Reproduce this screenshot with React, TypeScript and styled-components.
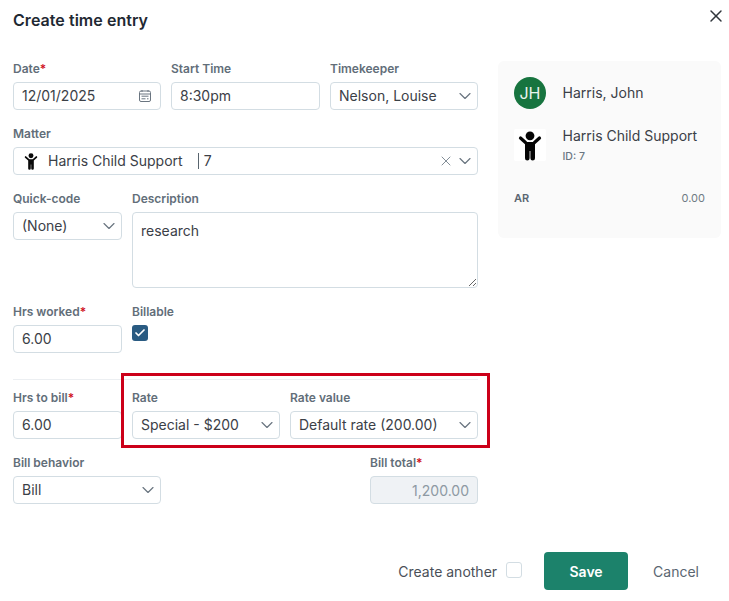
import React from "react";
import styled, { createGlobalStyle } from "styled-components";
import { X, ChevronDown, Check } from "lucide-react";

const Global = createGlobalStyle`
  html, body { margin: 0; padding: 0; background: #fff; }
  body { font-family: Inter, "Liberation Sans", sans-serif; color: #3b4047; }
  * { box-sizing: border-box; }
`;

const Page = styled.div`
  position: relative;
  width: 729px;
  height: 601px;
  overflow: hidden;
  padding: 0 8px 0 13px;
`;

const Header = styled.header`
  height: 62px;
  padding-top: 11px;
  display: flex;
  justify-content: space-between;
  align-items: flex-start;
`;

const Title = styled.h1`
  margin: 0;
  font-size: 16px;
  line-height: 19px;
  font-weight: 600;
  letter-spacing: 0.05px;
  color: #1f2933;
`;

const Close = styled.button`
  border: 0;
  background: none;
  padding: 0;
  margin: -5px -5px 0 0;
  width: 20px;
  height: 20px;
  color: #30363c;
  display: flex;
`;

const Body = styled.div`
  display: flex;
  gap: 20px;
  align-items: flex-start;
`;

const Form = styled.div`
  width: 465px;
  display: flex;
  flex-direction: column;
  gap: 17px;
`;

const Row = styled.div`
  display: flex;
  gap: 10px;
`;

const SpacedRow = styled(Row)`
  justify-content: space-between;
`;

const Field = styled.div<{ $w?: number }>`
  display: flex;
  flex-direction: column;
  width: ${(p) => (p.$w ? `${p.$w}px` : "auto")};
  flex: ${(p) => (p.$w ? "0 0 auto" : "1 1 0")};
`;

const Label = styled.label`
  height: 20px;
  font-size: 12px;
  line-height: 14px;
  font-weight: 600;
  color: #626e79;
`;

const Req = styled.span`
  color: #d0121f;
`;

const Box = styled.div<{ $disabled?: boolean }>`
  height: 28px;
  border: 1px solid #d3dde3;
  border-radius: 4px;
  background: ${(p) => (p.$disabled ? "#eff2f5" : "#fff")};
  color: ${(p) => (p.$disabled ? "#8d99a3" : "#3b4047")};
  display: flex;
  align-items: center;
  justify-content: ${(p) => (p.$disabled ? "flex-end" : "flex-start")};
  padding: 0 8px;
  font-size: 14px;
  white-space: nowrap;
`;

const Value = styled.span`
  flex: 1;
  line-height: 26px;
`;

const Chevron = styled(ChevronDown)`
  flex: none;
  color: #6a7580;
  margin-right: -6px;
  margin-left: 4px;
`;

const ClearIcon = styled(X)`
  flex: none;
  color: #7a858f;
  margin-right: -3px;
`;

const MatterIcon = styled.span`
  flex: none;
  display: flex;
  width: 18px;
  height: 18px;
  margin: 0 8px 0 0;
  color: #0a0a0a;
`;

const Sep = styled.span`
  display: inline-block;
  width: 1px;
  height: 16px;
  background: #59646e;
  margin: 0 5px 0 15px;
  vertical-align: -3px;
`;

const TextArea = styled.textarea`
  display: block;
  width: 100%;
  height: 76px;
  border: 1px solid #d3dde3;
  border-radius: 4px;
  padding: 8px;
  margin: 0;
  font: 14px/20px Inter, "Liberation Sans", sans-serif;
  color: #3b4047;
  outline: none;
`;

const CheckBox = styled.div`
  width: 16px;
  height: 16px;
  border-radius: 3px;
  background: #2a5b82;
  color: #fff;
  display: flex;
  align-items: center;
  justify-content: center;
`;

const Divider = styled.hr`
  margin: 9px 0 -6px;
  border: 0;
  border-top: 1px solid #eceff2;
  width: 100%;
`;

const Panel = styled.aside`
  width: 223px;
  height: 177px;
  margin-top: -1px;
  border-radius: 6px;
  background: #fafafa;
  padding: 16px;
`;

const Avatar = styled.div`
  width: 32px;
  height: 32px;
  border-radius: 50%;
  background: #17743f;
  color: #e9f3ed;
  display: flex;
  align-items: center;
  justify-content: center;
  font-size: 16px;
`;

const PanelRow = styled.div`
  display: flex;
  gap: 16.5px;
  margin-bottom: 20px;
`;

const PanelTop = styled(PanelRow)`
  align-items: center;
`;

const PanelText = styled.div`
  font-size: 14px;
  line-height: 20px;
  color: #3b4047;
`;

const PanelTextBlock = styled.div`
  margin-top: -3px;
`;

const PanelSub = styled.div`
  margin-top: 3px;
  font-size: 10.5px;
  line-height: 16px;
  color: #6a7681;
  font-weight: 500;
`;

const ChildTile = styled.div`
  width: 32px;
  height: 32px;
  background: #fff;
  border-radius: 2px;
  flex: none;
  color: #050505;
`;

const ArRow = styled.div`
  display: flex;
  justify-content: space-between;
  font-size: 11px;
  line-height: 14px;
  margin-top: 26px;
`;

const ArLabel = styled.span`
  font-weight: 600;
  color: #5a6671;
`;

const ArValue = styled.span`
  color: #6f7a84;
`;

const Footer = styled.footer`
  position: absolute;
  left: 0;
  right: 0;
  top: 552px;
  height: 38px;
  display: flex;
  align-items: center;
  justify-content: flex-end;
  padding-right: 30px;
`;

const FooterLabel = styled.span`
  font-size: 14px;
  color: #4a5058;
`;

const EmptyCheck = styled.div`
  width: 16px;
  height: 16px;
  border: 1px solid #d3dde3;
  border-radius: 3px;
  margin: -2px 22px 0 9px;
  background: #fff;
`;

const Save = styled.button`
  width: 84px;
  height: 38px;
  border: 0;
  border-radius: 4px;
  background: #1c826b;
  color: #fff;
  font: 600 14px Inter, "Liberation Sans", sans-serif;
  margin-right: 25px;
`;

const Cancel = styled.button`
  border: 0;
  background: none;
  padding: 0;
  font: 14px Inter, "Liberation Sans", sans-serif;
  color: #5a6671;
`;

const Callout = styled.div`
  position: absolute;
  left: 121px;
  top: 373px;
  width: 369px;
  height: 75px;
  border: 3px solid #cc0019;
  pointer-events: none;
`;

const Calendar = () => (
  <svg width="14" height="14" viewBox="0 0 14 14" fill="none" stroke="#6a7580" strokeWidth="1" style={{ flex: "none" }}>
    <rect x="1.5" y="2" width="11" height="10.5" rx="1.5" />
    <path d="M1.5 5h11M4 1v2M10 1v2M3.5 7.2h7M3.5 9.8h4M9 9.8h1.5" />
  </svg>
);

const Child = ({ size }: { size: number }) => (
  <svg width={size} height={size} viewBox="0 0 32 32" fill="currentColor">
    <circle cx="16" cy="6.8" r="4.4" />
    <path d="M6.5 9l5 4.5M25.5 9l-5 4.5" fill="none" stroke="currentColor" strokeWidth="3.2" strokeLinecap="round" />
    <path d="M11 13h10v16.2a2.3 2.3 0 0 1-4.6 0V22h-.8v7.2a2.3 2.3 0 0 1-4.6 0z" />
  </svg>
);

const Select = ({ children }: { children: React.ReactNode }) => (
  <Box>
    <Value>{children}</Value>
    <Chevron size={20} strokeWidth={1.4} />
  </Box>
);

export default function App() {
  return (
    <Page>
      <Global />
      <Header>
        <Title>Create time entry</Title>
        <Close aria-label="Close">
          <X size={20} strokeWidth={1.75} />
        </Close>
      </Header>
      <Body>
        <Form>
          <Row>
            <Field>
              <Label>Date<Req>*</Req></Label>
              <Box><Value>12/01/2025</Value><Calendar /></Box>
            </Field>
            <Field $w={149}>
              <Label>Start Time</Label>
              <Box><Value>8:30pm</Value></Box>
            </Field>
            <Field>
              <Label>Timekeeper</Label>
              <Select>Nelson, Louise</Select>
            </Field>
          </Row>
          <Field>
            <Label>Matter</Label>
            <Box>
              <MatterIcon><Child size={18} /></MatterIcon>
              <Value>Harris Child Support<Sep />7</Value>
              <ClearIcon size={16} strokeWidth={1.4} />
              <Chevron size={20} strokeWidth={1.4} />
            </Box>
          </Field>
          <Row>
            <Field $w={109}>
              <Label>Quick-code</Label>
              <Select>(None)</Select>
            </Field>
            <Field>
              <Label>Description</Label>
              <TextArea defaultValue="research" />
            </Field>
          </Row>
          <Row>
            <Field $w={109}>
              <Label>Hrs worked<Req>*</Req></Label>
              <Box><Value>6.00</Value></Box>
            </Field>
            <Field>
              <Label>Billable</Label>
              <CheckBox><Check size={12} strokeWidth={3.5} /></CheckBox>
            </Field>
          </Row>
          <Divider />
          <Row>
            <Field $w={109}>
              <Label>Hrs to bill<Req>*</Req></Label>
              <Box><Value>6.00</Value></Box>
            </Field>
            <Field $w={148}>
              <Label>Rate</Label>
              <Select>Special - $200</Select>
            </Field>
            <Field>
              <Label>Rate value</Label>
              <Select>Default rate (200.00)</Select>
            </Field>
          </Row>
          <SpacedRow>
            <Field $w={148}>
              <Label>Bill behavior</Label>
              <Select>Bill</Select>
            </Field>
            <Field $w={108}>
              <Label>Bill total<Req>*</Req></Label>
              <Box $disabled>1,200.00</Box>
            </Field>
          </SpacedRow>
        </Form>
        <Panel>
          <PanelTop>
            <Avatar>JH</Avatar>
            <PanelText>Harris, John</PanelText>
          </PanelTop>
          <PanelRow>
            <ChildTile><Child size={32} /></ChildTile>
            <PanelTextBlock>
              <PanelText>Harris Child Support</PanelText>
              <PanelSub>ID: 7</PanelSub>
            </PanelTextBlock>
          </PanelRow>
          <ArRow>
            <ArLabel>AR</ArLabel>
            <ArValue>0.00</ArValue>
          </ArRow>
        </Panel>
      </Body>
      <Footer>
        <FooterLabel>Create another</FooterLabel>
        <EmptyCheck />
        <Save>Save</Save>
        <Cancel>Cancel</Cancel>
      </Footer>
      <Callout />
    </Page>
  );
}
